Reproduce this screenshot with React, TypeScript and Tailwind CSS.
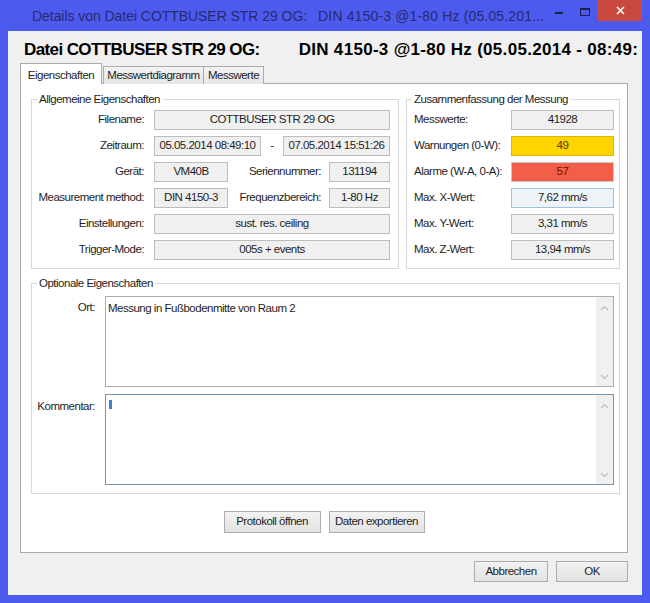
import type { ReactNode } from 'react';

const font = "font-['Liberation_Sans',Arial,sans-serif]";

function Field({ children, className = '' }: { children?: ReactNode; className?: string }) {
  return (
    <div className={`h-[20px] shrink-0 flex items-center justify-center border ${className}`}>
      {children}
    </div>
  );
}

function Btn({ children, className = '' }: { children: ReactNode; className?: string }) {
  return (
    <button className={`flex items-center justify-center border border-[#acacac] bg-linear-to-b from-[#f2f2f2] to-[#e3e3e3] text-[#1e1e1e] ${className}`}>
      {children}
    </button>
  );
}

function Chevron({ up }: { up?: boolean }) {
  return (
    <svg width="9" height="6" viewBox="0 0 9 6">
      <polyline
        points={up ? '1,5 4.5,1.5 8,5' : '1,1 4.5,4.5 8,1'}
        fill="none"
        stroke="#bcbcbc"
        strokeWidth="1.2"
      />
    </svg>
  );
}

function TextBox({ children, focused }: { children?: ReactNode; focused?: boolean }) {
  return (
    <div
      className={`flex h-[91px] flex-1 border bg-white ${
        focused ? 'border-[#7396b2]' : 'border-[#abadb3]'
      }`}
    >
      <div className="flex-1 pl-[2px] pt-[3px] text-[#1e1e1e]">{children}</div>
      <div className="flex w-[17px] flex-col items-center justify-between bg-[#f0f0f0] pt-[8px] pb-[6px]">
        <Chevron up />
        <Chevron />
      </div>
    </div>
  );
}

const gray = 'border-[#bdbdbd] bg-[#f0f0f0]';

export default function App() {
  return (
    <div className={`${font} flex h-[603px] w-[650px] flex-col overflow-hidden bg-[#4d5aee] text-[11.5px] tracking-[-0.5px] text-[#1e1e1e]`}>
      {/* Title bar */}
      <div className="flex h-[31px] shrink-0">
        <div className="flex flex-1 whitespace-nowrap pl-[32px] pt-[8px] text-[14px] leading-[16px] tracking-[-0.05px] text-[#262a6e]">
          <span>Details von Datei COTTBUSER STR 29 OG:</span>
          <span className="ml-[11px] tracking-[0.15px]">DIN 4150-3 @1-80 Hz (05.05.201...</span>
        </div>
        <div className="flex items-start pr-[8px]">
          <div className="flex h-[20px] w-[26px] justify-center pt-[12px]">
            <div className="h-[2px] w-[8px] bg-[#1d1f4a]" />
          </div>
          <div className="flex h-[20px] w-[26px] justify-center pt-[8px]">
            <div className="h-[8px] w-[10px] border border-t-2 border-[#1d1f4a]" />
          </div>
          <div className="flex h-[21px] w-[44px] items-center justify-center bg-[#c9493f]">
            <svg width="9" height="9" viewBox="0 0 9 9">
              <path d="M1 1 L8 8 M8 1 L1 8" stroke="#fff" strokeWidth="1.6" />
            </svg>
          </div>
        </div>
      </div>

      {/* Client area */}
      <div className="mx-[8px] flex h-[564px] shrink-0 flex-col overflow-hidden bg-[#f0f0f0]">
        <div className="mt-[8px] flex whitespace-nowrap pl-[16px] text-[17px] font-bold leading-[21px] text-black">
          <span className="tracking-[-0.6px]">Datei COTTBUSER STR 29 OG:</span>
          <span className="ml-[39px] tracking-[0.3px]">DIN 4150-3 @1-80 Hz (05.05.2014 - 08:49:</span>
        </div>

        {/* Tabs */}
        <div className="ml-[12px] mt-[4px] w-[608px]">
          <div className="relative z-10 flex h-[20px] items-end">
            <div className="flex h-[21px] w-[82px] items-start justify-center border border-b-0 border-[#acacac] bg-white pt-[3px]">
              Eigenschaften
            </div>
            <div className="ml-[1px] flex h-[18px] w-[101px] items-center justify-center border border-b-0 border-[#acacac] bg-linear-to-b from-[#f2f2f2] to-[#e6e6e6]">
              Messwertdiagramm
            </div>
            <div className="-ml-px flex h-[18px] w-[61px] items-center justify-center border border-b-0 border-[#acacac] bg-linear-to-b from-[#f2f2f2] to-[#e6e6e6]">
              Messwerte
            </div>
          </div>

          <div className="-mt-px flex h-[470px] flex-col border border-[#acacac] bg-white pl-[10px] pr-[7px] pt-[8px]">
            <div className="flex gap-[7px]">
              {/* Allgemeine Eigenschaften */}
              <fieldset className="w-[368px] border border-[#d9d9d9] pb-[8px]">
                <legend className="ml-[5px] px-[2px] leading-[14px]">Allgemeine Eigenschaften</legend>
                <div className="flex flex-col gap-[6px] pr-[8px] pt-[4px]">
                  <div className="flex items-center gap-[10px]">
                    <div className="w-[112px] text-right">Filename:</div>
                    <Field className={`flex-1 ${gray}`}>COTTBUSER STR 29 OG</Field>
                  </div>
                  <div className="flex items-center gap-[10px]">
                    <div className="w-[112px] text-right">Zeitraum:</div>
                    <div className="flex flex-1 items-center">
                      <Field className={`w-[107px] ${gray}`}>05.05.2014 08:49:10</Field>
                      <div className="flex-1 text-center">-</div>
                      <Field className={`w-[107px] ${gray}`}>07.05.2014 15:51:26</Field>
                    </div>
                  </div>
                  <div className="flex items-center gap-[10px]">
                    <div className="w-[112px] text-right">Gerät:</div>
                    <div className="flex flex-1 items-center">
                      <Field className={`w-[74px] ${gray}`}>VM40B</Field>
                      <div className="flex-1 pr-[8px] text-right">Seriennummer:</div>
                      <Field className={`w-[61px] ${gray}`}>131194</Field>
                    </div>
                  </div>
                  <div className="flex items-center gap-[10px]">
                    <div className="w-[112px] text-right">Measurement method:</div>
                    <div className="flex flex-1 items-center">
                      <Field className={`w-[74px] ${gray}`}>DIN 4150-3</Field>
                      <div className="flex-1 pr-[8px] text-right">Frequenzbereich:</div>
                      <Field className={`w-[61px] ${gray}`}>1-80 Hz</Field>
                    </div>
                  </div>
                  <div className="flex items-center gap-[10px]">
                    <div className="w-[112px] text-right">Einstellungen:</div>
                    <Field className={`flex-1 ${gray}`}>sust. res. ceiling</Field>
                  </div>
                  <div className="flex items-center gap-[10px]">
                    <div className="w-[112px] text-right">Trigger-Mode:</div>
                    <Field className={`flex-1 ${gray}`}>005s + events</Field>
                  </div>
                </div>
              </fieldset>

              {/* Zusammenfassung */}
              <fieldset className="w-[214px] border border-[#d9d9d9] pb-[8px]">
                <legend className="ml-[5px] px-[2px] leading-[14px]">Zusammenfassung der Messung</legend>
                <div className="flex flex-col gap-[6px] pl-[7px] pr-[5px] pt-[4px]">
                  <div className="flex items-center">
                    <div className="flex-1">Messwerte:</div>
                    <Field className={`w-[103px] ${gray}`}>41928</Field>
                  </div>
                  <div className="flex items-center">
                    <div className="flex-1">Warnungen (0-W):</div>
                    <Field className="w-[103px] border-[#d9b800] bg-[#ffd400] text-[#4a3a00]">49</Field>
                  </div>
                  <div className="flex items-center">
                    <div className="flex-1">Alarme (W-A, 0-A):</div>
                    <Field className="w-[103px] border-[#c9c9c9] bg-[#f45d47] text-[#6e1408]">57</Field>
                  </div>
                  <div className="flex items-center">
                    <div className="flex-1">Max. X-Wert:</div>
                    <Field className="w-[103px] border-[#9cc3e2] bg-[#eef3f7]">7,62 mm/s</Field>
                  </div>
                  <div className="flex items-center">
                    <div className="flex-1">Max. Y-Wert:</div>
                    <Field className={`w-[103px] ${gray}`}>3,31 mm/s</Field>
                  </div>
                  <div className="flex items-center">
                    <div className="flex-1">Max. Z-Wert:</div>
                    <Field className={`w-[103px] ${gray}`}>13,94 mm/s</Field>
                  </div>
                </div>
              </fieldset>
            </div>

            {/* Optionale Eigenschaften */}
            <fieldset className="mt-[7px] border border-[#d9d9d9] pb-[8px]">
              <legend className="ml-[5px] px-[2px] leading-[14px]">Optionale Eigenschaften</legend>
              <div className="flex flex-col gap-[7px] pr-[5px] pt-[6px]">
                <div className="flex gap-[10px]">
                  <div className="w-[63px] pt-[3px] text-right">Ort:</div>
                  <TextBox>Messung in Fußbodenmitte von Raum 2</TextBox>
                </div>
                <div className="flex gap-[10px]">
                  <div className="w-[63px] pt-[4px] text-right">Kommentar:</div>
                  <TextBox focused>
                    <div className="ml-[1px] mt-[2px] h-[9px] w-[3px] bg-[#3f7fd4]" />
                  </TextBox>
                </div>
              </div>
            </fieldset>

            <div className="mt-[17px] flex justify-center gap-[8px] pr-[3px]">
              <Btn className="h-[22px] w-[97px]">Protokoll öffnen</Btn>
              <Btn className="h-[22px] w-[96px]">Daten exportieren</Btn>
            </div>
          </div>
        </div>

        {/* Dialog buttons */}
        <div className="mt-[8px] flex justify-end gap-[8px] pr-[14px]">
          <Btn className="h-[21px] w-[74px]">Abbrechen</Btn>
          <Btn className="h-[21px] w-[72px]">OK</Btn>
        </div>
      </div>
    </div>
  );
}
